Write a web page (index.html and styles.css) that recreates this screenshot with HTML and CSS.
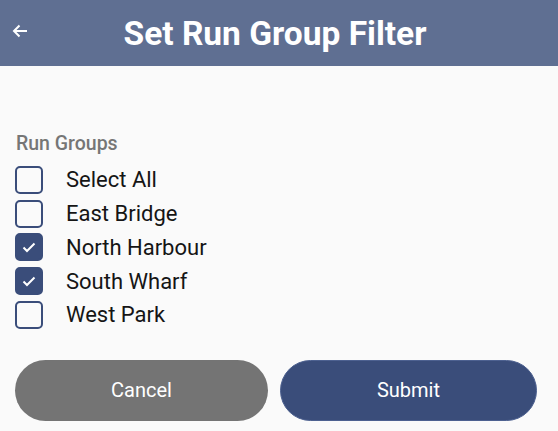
FILE: index.html
```html
<!DOCTYPE html>
<html>
<head>
<meta charset="utf-8">
<link rel="stylesheet" href="styles.css">
</head>
<body>
<header class="appbar">
  <span class="back">
    <svg width="16" height="14" viewBox="0 0 16 14"><path d="M15 7H2M7.5 1.5L2 7l5.5 5.5" fill="none" stroke="#fff" stroke-width="2"/></svg>
  </span>
  <h1 class="title">Set Run Group Filter</h1>
</header>
<main class="content">
  <div class="label">Run Groups</div>
  <ul class="list">
    <li class="row"><span class="box"></span><span class="text">Select All</span></li>
    <li class="row"><span class="box"></span><span class="text">East Bridge</span></li>
    <li class="row"><span class="box checked"><svg width="14" height="12" viewBox="0 0 14 12"><path d="M1.5 6.5l3.5 3.5L12.5 2.5" fill="none" stroke="#fff" stroke-width="2"/></svg></span><span class="text">North Harbour</span></li>
    <li class="row"><span class="box checked"><svg width="14" height="12" viewBox="0 0 14 12"><path d="M1.5 6.5l3.5 3.5L12.5 2.5" fill="none" stroke="#fff" stroke-width="2"/></svg></span><span class="text">South Wharf</span></li>
    <li class="row"><span class="box"></span><span class="text">West Park</span></li>
  </ul>
  <div class="buttons">
    <button class="btn cancel">Cancel</button>
    <button class="btn submit">Submit</button>
  </div>
</main>
</body>
</html>
```
FILE: styles.css
```css
html, body { margin: 0; padding: 0; }
body {
  background: #fafafa;
  font-family: Roboto, "Noto Sans", sans-serif;
  width: 558px;
  height: 431px;
  overflow: hidden;
}
.appbar {
  height: 66px;
  background: #5f6f92;
  display: flex;
  align-items: center;
  position: relative;
}
.back {
  position: absolute;
  left: 12px;
  top: 24px;
  display: flex;
}
.title {
  margin: 0;
  width: 100%;
  text-align: center;
  color: #fff;
  font-size: 33.5px;
  font-weight: 700;
  padding-right: 8px;
  box-sizing: border-box;
}
.content {
  padding: 66px 15px 0 15px;
}
.label {
  color: #767676;
  font-size: 19.5px;
  font-weight: 500;
  line-height: 24px;
  padding-left: 1px;
  height: 31px;
}
.list {
  list-style: none;
  margin: 0;
  padding: 0;
}
.row {
  display: flex;
  align-items: center;
  height: 33.75px;
}
.box {
  width: 28px;
  height: 28px;
  box-sizing: border-box;
  border: 2.5px solid #3a4d7a;
  border-radius: 5px;
  display: flex;
  align-items: center;
  justify-content: center;
}
.box.checked { background: #3a4d7a; }
.text {
  margin-left: 23px;
  font-size: 22px;
  color: #151515;
}
.buttons {
  display: flex;
  gap: 12px;
  margin-top: 28px;
}
.btn {
  height: 61px;
  border-radius: 31px;
  font-family: Roboto, sans-serif;
  font-size: 20px;
  color: #fff;
  border: none;
  padding: 0;
}
.cancel { width: 253px; background: #747474; }
.submit { width: 257px; background: #3a4d7a; border: 1.5px solid #4d6190; }
```
